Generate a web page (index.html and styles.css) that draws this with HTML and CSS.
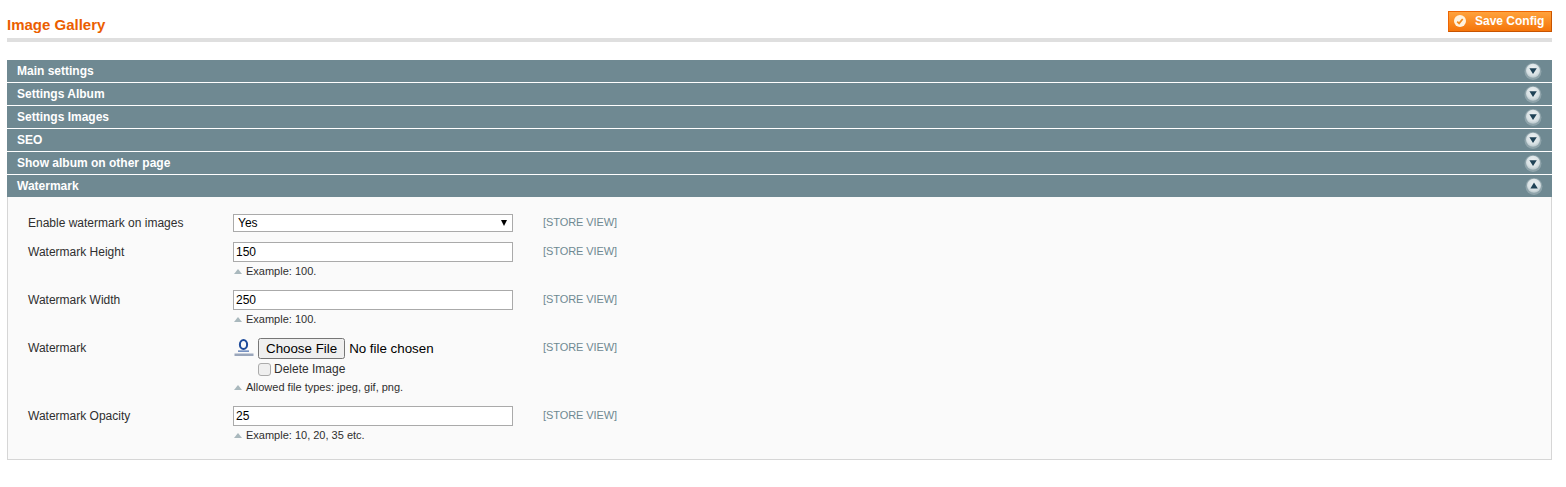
FILE: index.html
```html
<!DOCTYPE html>
<html lang="en">
<head>
<meta charset="utf-8">
<title>Image Gallery</title>
<link rel="stylesheet" href="styles.css">
</head>
<body>
<svg class="defs" width="0" height="0" aria-hidden="true">
  <defs>
    <radialGradient id="knob" cx="50%" cy="35%" r="65%">
      <stop offset="0" stop-color="#eef2f3"/>
      <stop offset="0.7" stop-color="#d8e1e4"/>
      <stop offset="1" stop-color="#b6c5ca"/>
    </radialGradient>
    <symbol id="down" viewBox="0 0 18 18">
      <circle cx="9" cy="9.5" r="8.5" fill="#8fa4ab"/>
      <circle cx="9" cy="8.8" r="7" fill="url(#knob)"/>
      <path d="M5.4 6.2h7.4L9 12z" fill="#1f4256"/>
    </symbol>
    <symbol id="up" viewBox="0 0 18 18">
      <circle cx="9" cy="9.5" r="8.5" fill="#8fa4ab"/>
      <circle cx="9" cy="8.8" r="7" fill="url(#knob)"/>
      <path d="M5.4 11.6h7.4L9 5.6z" fill="#1f4256"/>
    </symbol>
  </defs>
</svg>
<main class="page">
  <header class="page-head">
    <h3 class="page-title">Image Gallery</h3>
    <button class="save-btn" type="button">
      <svg class="save-icon" width="14" height="14" viewBox="0 0 14 14" aria-hidden="true">
        <circle cx="7" cy="7" r="6" fill="#fff3e0"/>
        <path d="M4.2 7.6l1.9 1.8 3.6-4.4" fill="none" stroke="#f28a1c" stroke-width="1.7"/>
      </svg>
      <span>Save Config</span>
    </button>
  </header>

  <section class="sections">
    <div class="sec-head"><span>Main settings</span><svg class="knob" width="18" height="18"><use href="#down"/></svg></div>
    <div class="sec-head"><span>Settings Album</span><svg class="knob" width="18" height="18"><use href="#down"/></svg></div>
    <div class="sec-head"><span>Settings Images</span><svg class="knob" width="18" height="18"><use href="#down"/></svg></div>
    <div class="sec-head"><span>SEO</span><svg class="knob" width="18" height="18"><use href="#down"/></svg></div>
    <div class="sec-head"><span>Show album on other page</span><svg class="knob" width="18" height="18"><use href="#down"/></svg></div>
    <div class="sec-head sec-open"><span>Watermark</span><svg class="knob knob-up" width="18" height="18"><use href="#up"/></svg></div>

    <div class="panel">
      <div class="row row-select">
        <label class="lbl">Enable watermark on images</label>
        <div class="val"><div class="sel-wrap"><select class="sel"><option>Yes</option><option>No</option></select></div></div>
        <div class="scope">[STORE VIEW]</div>
      </div>
      <div class="row">
        <label class="lbl">Watermark Height</label>
        <div class="val"><input class="txt" type="text" value="150"><p class="note">Example: 100.</p></div>
        <div class="scope">[STORE VIEW]</div>
      </div>
      <div class="row">
        <label class="lbl">Watermark Width</label>
        <div class="val"><input class="txt" type="text" value="250"><p class="note">Example: 100.</p></div>
        <div class="scope">[STORE VIEW]</div>
      </div>
      <div class="row">
        <label class="lbl">Watermark</label>
        <div class="val">
          <div class="file-line">
            <svg class="thumb" width="22" height="22" viewBox="0 0 22 22" aria-hidden="true">
              <ellipse cx="10.5" cy="6.5" rx="3.6" ry="4.6" fill="none" stroke="#1d4a9a" stroke-width="2"/>
              <path d="M5 12.6h11v1H5z" fill="#1d4a9a"/>
              <rect x="1.5" y="15.5" width="19" height="2.5" fill="#9aa6bb"/>
            </svg>
            <input class="file" type="file">
          </div>
          <label class="del"><input class="chk" type="checkbox"><span>Delete Image</span></label>
          <p class="note note-file">Allowed file types: jpeg, gif, png.</p>
        </div>
        <div class="scope">[STORE VIEW]</div>
      </div>
      <div class="row">
        <label class="lbl">Watermark Opacity</label>
        <div class="val"><input class="txt" type="text" value="25"><p class="note">Example: 10, 20, 35 etc.</p></div>
        <div class="scope">[STORE VIEW]</div>
      </div>
    </div>
  </section>
</main>
</body>
</html>
```
FILE: styles.css
```css
* { box-sizing: border-box; }
html, body { margin: 0; padding: 0; background: #fff; }
body { font: 12px/1.25 "Liberation Sans", Arial, sans-serif; color: #2f2f2f; }
.defs { position: absolute; }

.page { padding: 11px 14px 0 7px; }

.page-head {
  display: flex;
  justify-content: space-between;
  align-items: flex-start;
  height: 31px;
  border-bottom: 4px solid #dfdfdf;
  margin-bottom: 18px;
}
.page-title {
  margin: 5px 0 0;
  font-size: 15px;
  line-height: 18px;
  font-weight: bold;
  color: #eb5e00;
}
.save-btn {
  display: flex;
  align-items: center;
  gap: 6px;
  width: 104px;
  height: 21px;
  margin: 0;
  padding: 0 0 2px 6px;
  border: 1px solid #ed6502;
  border-bottom-color: #c85400;
  border-right-color: #c85400;
  background: linear-gradient(#ffa23c, #f5750a);
  color: #fff;
  font: bold 12px/1 "Liberation Sans", Arial, sans-serif;
}
.save-icon { margin-top: 1px; margin-left: -2px; margin-right: 2px; }

.sections { display: flex; flex-direction: column; }
.sec-head {
  display: flex;
  justify-content: space-between;
  align-items: center;
  height: 22px;
  margin-bottom: 1px;
  padding: 0 10px;
  background: #6f8992;
  color: #fff;
  font-weight: bold;
  font-size: 12px;
}
.sec-open { margin-bottom: 0; }
.knob { display: block; }
.knob-up { margin-right: -1px; }

.panel {
  height: 263px;
  padding: 17px 20px 0;
  background: #fafafa;
  border: 1px solid #d6d6d6;
  border-top: 0;
}
.row {
  display: flex;
  align-items: flex-start;
  margin-bottom: 10px;
}
.row-select { height: 18px; }
.lbl { flex: 0 0 205px; padding-top: 3px; color: #2f2f2f; }
.row-select .lbl { padding-top: 2px; }
.val { flex: 0 0 280px; }
.scope {
  margin-left: 30px;
  padding-top: 2px;
  font-size: 11px;
  line-height: 14px;
  letter-spacing: -0.08px;
  color: #6f8992;
}
.row-select .scope { padding-top: 1px; }

.sel-wrap { position: relative; width: 280px; height: 18px; }
.sel-wrap::after {
  content: "";
  position: absolute;
  right: 6px;
  top: 6px;
  border-left: 3px solid transparent;
  border-right: 3px solid transparent;
  border-top: 6px solid #000;
  pointer-events: none;
}
.sel {
  display: block;
  width: 100%;
  height: 18px;
  padding: 0 0 0 4px;
  appearance: none;
  border: 1px solid #aaa;
  border-radius: 0;
  background-color: #fff;
  color: #000;
  font: 12px "Liberation Sans", Arial, sans-serif;
}
.txt {
  display: block;
  width: 280px;
  height: 20px;
  padding: 2px;
  border: 1px solid #aaa;
  border-radius: 0;
  background: #fff;
  color: #000;
  font: 12px "Liberation Sans", Arial, sans-serif;
}
.note {
  margin: 2px 0 0;
  padding-left: 13px;
  height: 16px;
  font-size: 11px;
  line-height: 14px;
  color: #2f2f2f;
  position: relative;
}
.note::before {
  content: "";
  position: absolute;
  left: 1px;
  top: 5px;
  border-left: 4px solid transparent;
  border-right: 4px solid transparent;
  border-bottom: 5px solid #a9b8bd;
}
.file-line { display: flex; align-items: center; height: 21px; }
.thumb { flex: none; margin-right: 3px; }
.file {
  font: 13.33px "Liberation Sans", Arial, sans-serif;
  color: #000;
  width: 230px;
}
.del {
  display: flex;
  align-items: center;
  height: 16px;
  margin: 2px 0 0 25px;
  color: #2f2f2f;
}
.chk {
  appearance: none;
  margin: 0 3px 0 0;
  width: 13px;
  height: 13px;
  border: 1px solid #ababab;
  border-radius: 3px;
  background: #efefef;
}
.note-file { margin-top: 3px; }
```
